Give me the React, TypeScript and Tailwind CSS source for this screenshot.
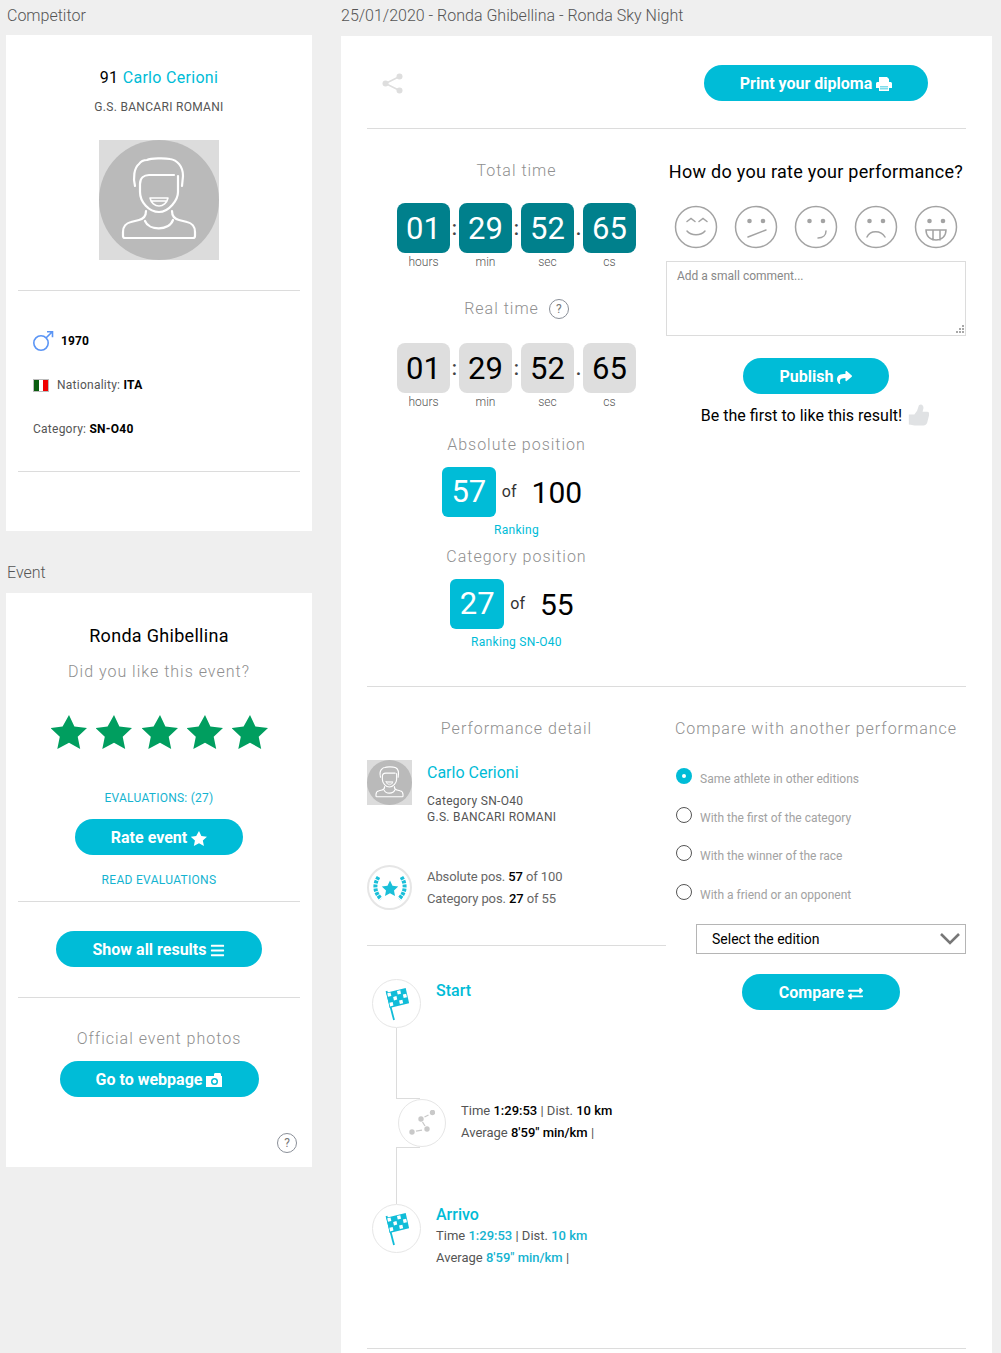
import React from 'react'
import { FaShare, FaBars, FaExchangeAlt } from 'react-icons/fa'

const Hr = ({ className = '' }: { className?: string }) => <div className={`h-px bg-[#dcdcdc] ${className}`} />

const Pill = ({ label, icon, className = '' }: { label: string; icon: React.ReactNode; className?: string }) => (
  <button type="button" className={`flex h-9 items-center justify-center gap-1 rounded-full bg-[#00bcd7] pt-[2px] text-[16px] font-bold text-white ${className}`}>
    {label}
    {icon}
  </button>
)

const Heading = ({ children, className = '' }: { children: React.ReactNode; className?: string }) => (
  <div className={`text-center text-[16px] leading-5 font-light tracking-[1px] text-[#8f8f8f] ${className}`}>{children}</div>
)

const HelpIcon = ({ size = 20 }: { size?: number }) => (
  <span
    className="inline-flex items-center justify-center rounded-full border border-[#8a8f98] text-[12px] text-[#777]"
    style={{ width: size, height: size }}
  >
    ?
  </span>
)

const Star = ({ className = '' }: { className?: string }) => (
  <svg viewBox="0 0 36 34" className={className} fill="currentColor">
    <path d="M18 0l5.400 11.600 12.600 1.500-9.300 8.700 2.500 12.200L18 27.800 6.300 34l2.500-12.200L-.5 13.100l12.100-1.500z" />
  </svg>
)

const Avatar = ({ stroke = 2.2 }: { stroke?: number }) => (
  <svg viewBox="0 0 120 120" className="h-full w-full">
    <rect width="120" height="120" fill="#dcdcdc" />
    <circle cx="60" cy="60" r="60" fill="#bababa" />
    <g fill="none" stroke="#fff" strokeWidth={stroke} strokeLinecap="round" strokeLinejoin="round">
      <path d="M36 46C34 38 35 28 40 24 42 21 46 20 48 20 52 18 66 18 71 19 78 20 84 26 84 36L83 46" />
      <path d="M75 35H50C45 35 41 38 41 44V52C41 62 50 72 60 72 70 72 79 60 79 52V36" />
      <path d="M51 58H69C68 63 64 66 60 66 56 66 52 63 51 58ZM53 61H67" strokeWidth={stroke * 0.7} />
      <path d="M47 71C47 76 44 79 40 80L32 82C27 83 24 87 24 92V96C24 97 25 98 26 98H94C95 98 96 97 96 96V92C96 87 93 83 88 82L80 80C76 79 73 76 73 71" />
      <path d="M46 81C50 91 70 91 74 80" />
    </g>
  </svg>
)

const TimeBox = ({ value, unit, dark }: { value: string; unit: string; dark?: boolean }) => (
  <div className="flex w-[53px] flex-col items-center">
    <div className={`flex h-[50px] w-[53px] items-center justify-center rounded-lg pt-[2px] text-[31px] ${dark ? 'bg-[#00808c] text-white' : 'bg-[#dedede] text-black'}`}>
      {value}
    </div>
    <span className="mt-[2px] text-[12px] leading-[14px] font-light text-[#555]">{unit}</span>
  </div>
)

const Sep = ({ c }: { c: string }) => <span className="flex h-[50px] w-[9px] items-center justify-center text-[20px] font-medium text-[#444]">{c}</span>

const Timer = ({ dark }: { dark?: boolean }) => (
  <div className="ml-[30px] flex">
    <TimeBox value="01" unit="hours" dark={dark} />
    <Sep c=":" />
    <TimeBox value="29" unit="min" dark={dark} />
    <Sep c=":" />
    <TimeBox value="52" unit="sec" dark={dark} />
    <Sep c="." />
    <TimeBox value="65" unit="cs" dark={dark} />
  </div>
)

const Position = ({ value, total, label, className = '' }: { value: string; total: string; label: string; className?: string }) => (
  <div className={`flex flex-col items-center ${className}`}>
    <div className="mr-[9px] flex items-center">
      <div className="flex h-[50px] w-[54px] items-center justify-center rounded-md bg-[#00bcd7] pt-px text-[31px] text-white">{value}</div>
      <span className="ml-[6px] text-[16px] text-[#333]">of</span>
      <span className="ml-[15px] text-[30px] text-black">{total}</span>
    </div>
    <span className="mt-[5px] text-[12px] leading-4 tracking-[0.3px] text-[#00bcd7]">{label}</span>
  </div>
)

const Face = ({ children }: { children: React.ReactNode }) => (
  <svg viewBox="0 0 44 44" className="h-11 w-11" fill="none" stroke="#a3a3a3" strokeWidth="1.500" strokeLinecap="round">
    <circle cx="22" cy="22" r="20.500" />
    {children}
  </svg>
)

const Eyes = () => (
  <>
    <circle cx="15.500" cy="16" r="2.300" fill="#a3a3a3" stroke="none" />
    <circle cx="29" cy="16" r="2.300" fill="#a3a3a3" stroke="none" />
  </>
)

const Faces = () => (
  <div className="ml-[8px] flex gap-4">
    <Face>
      <path d="M13 16.500l4-3 4 3M25 16.500l4-3 4 3M13 26c4 5 14 5 18 0" />
    </Face>
    <Face>
      <Eyes />
      <path d="M14 32l18-7" />
    </Face>
    <Face>
      <Eyes />
      <path d="M24 33c5 0 8-3 8-7" />
    </Face>
    <Face>
      <Eyes />
      <path d="M13 32c3-7 14-7 18 0" />
    </Face>
    <Face>
      <Eyes />
      <path d="M12 25H32C32 31 28 35 22 35 16 35 12 31 12 25ZM19 25V35M26 25V35" />
    </Face>
  </div>
)

const checker = [
  [0, 0],
  [2, 0],
  [1, 1],
  [3, 1],
  [0, 2],
  [2, 2],
]

const Flag = () => (
  <svg viewBox="0 0 24 34" className="h-[34px] w-[24px]">
    <path d="M1.500 4L9 33" fill="none" stroke="#10bcd8" strokeWidth="1.800" />
    <g transform="matrix(19.4 -4.7 3.4 15.3 1.300 5.700)">
      <rect width="1" height="1" fill="#10bcd8" />
      {checker.map(([x, y]) => (
        <rect key={`${x}-${y}`} x={0.04 + x * 0.25} y={0.05 + (y * 0.94) / 3} width="0.17" height="0.23" fill="#fff" />
      ))}
    </g>
  </svg>
)

const Circle = ({ children, className = '' }: { children: React.ReactNode; className?: string }) => (
  <div className={`flex shrink-0 items-center justify-center rounded-full border border-[#e6e6e6] bg-white ${className}`}>{children}</div>
)

const Radio = ({ label, on }: { label: string; on?: boolean }) => (
  <div className="flex h-[38.600px] items-start">
    <span className={`mt-[1px] flex h-4 w-4 items-center justify-center rounded-full ${on ? 'bg-[#00bcd7]' : 'border border-[#555]'}`}>
      {on && <span className="h-1 w-1 rounded-full bg-white" />}
    </span>
    <span className="mt-[4px] ml-2 text-[12px] leading-4 text-[#a2a2a2]">{label}</span>
  </div>
)

export default function App() {
  return (
    <div className="flex min-h-[1353px] bg-[#efefef] pl-[6px] font-['Roboto',sans-serif] text-[#555]">
      <aside className="w-[306px] shrink-0">
        <div className="h-[35px] pt-[6px] pl-px text-[16px] leading-5 font-light">Competitor</div>
        <section className="h-[496px] bg-white px-3 pt-[33px]">
          <div className="text-center text-[16px] leading-5 tracking-[0.3px] text-black">
            91 <span className="text-[#00bcd7]">Carlo Cerioni</span>
          </div>
          <div className="mt-[11px] text-center text-[12px] leading-4 tracking-[0.3px]">G.S. BANCARI ROMANI</div>
          <div className="mx-auto mt-[25px] h-[120px] w-[120px]">
            <Avatar />
          </div>
          <Hr className="mt-[30px]" />
          <div className="mt-[38px] flex h-[24px] items-center pl-[14px]">
            <svg viewBox="0 0 22 22" className="h-[22px] w-[22px]" fill="none" stroke="#5b95f5" strokeWidth="1.600">
              <circle cx="9" cy="13" r="7.200" />
              <path d="M14 8l6-6M15 1.800h5.500v5.500" />
            </svg>
            <b className="ml-[7px] text-[12px] tracking-[0.1px] text-black">1970</b>
          </div>
          <div className="mt-[24px] flex h-[16px] items-center pl-[15px] text-[12px] tracking-[0.25px]">
            <span className="flex h-[13px] w-[16px] border border-[#bbb]">
              <span className="flex-1 bg-[#0a5c0f]" />
              <span className="flex-1 bg-white" />
              <span className="flex-1 bg-[#f00000]" />
            </span>
            <span className="ml-2">
              Nationality: <b className="text-black">ITA</b>
            </span>
          </div>
          <div className="mt-[28px] h-[16px] pl-[15px] text-[12px] leading-4 tracking-[0.25px]">
            Category: <b className="text-black">SN-O40</b>
          </div>
          <Hr className="mt-[34px]" />
        </section>
        <div className="h-[62px] pt-[32px] pl-px text-[16px] leading-5 font-light">Event</div>
        <section className="h-[574px] bg-white px-3 pt-[33px]">
          <div className="text-center text-[18px] leading-5 tracking-[0.3px] text-black">Ronda Ghibellina</div>
          <Heading className="mt-[16px]">Did you like this event?</Heading>
          <div className="mt-[33px] ml-[33px] flex gap-[9.300px]">
            {[0, 1, 2, 3, 4].map((i) => (
              <Star key={i} className="h-[34px] w-[36px] text-[#009e5f]" />
            ))}
          </div>
          <div className="mt-[41px] text-center text-[12px] leading-4 tracking-[0.25px] text-[#14b3d0]">EVALUATIONS: (27)</div>
          <Pill label="Rate event" icon={<Star className="h-[15px] w-[16px]" />} className="mx-auto mt-[13px] w-[168px]" />
          <div className="mt-[17px] text-center text-[12px] leading-4 tracking-[0.3px] text-[#14b3d0]">READ EVALUATIONS</div>
          <Hr className="mt-[13px]" />
          <Pill label="Show all results" icon={<FaBars className="h-[15px] w-[15px]" />} className="mx-auto mt-[29px] w-[206px]" />
          <Hr className="mt-[30px]" />
          <Heading className="mt-[31px]">Official event photos</Heading>
          <Pill
            label="Go to webpage"
            icon={
              <svg viewBox="0 0 16 14" className="h-[14px] w-[16px]" fill="#fff">
                <path d="M0 3h8V1.500C8 .7 8.500 0 9.500 0h4c1 0 1.500.7 1.500 1.500V3h1v11H0z" />
                <circle cx="8.500" cy="8.500" r="3.500" fill="#00bcd7" />
                <circle cx="8.500" cy="8.500" r="2" fill="#fff" />
              </svg>
            }
            className="mx-auto mt-[12px] w-[199px]"
          />
          <div className="mt-[36px] flex justify-end pr-[3px]">
            <HelpIcon />
          </div>
        </section>
      </aside>

      <main className="ml-[29px] w-[651px] shrink-0">
        <div className="h-[36px] pt-[6px] text-[16px] leading-5 font-light">25/01/2020 - Ronda Ghibellina - Ronda Sky Night</div>
        <section className="bg-white px-[26px] pb-[4px]">
          <div className="flex h-[92px] items-start justify-between pt-[29px]">
            <svg viewBox="0 0 21 21" className="mt-[8px] ml-[15px] h-[21px] w-[21px]" fill="#dedede">
              <circle cx="17.500" cy="3.500" r="3" />
              <circle cx="3.500" cy="10.500" r="3" />
              <circle cx="17.500" cy="17.500" r="3" />
              <path d="M17.500 3.500l-14 7 14 7" fill="none" stroke="#dedede" strokeWidth="1.500" />
            </svg>
            <Pill
              label="Print your diploma"
              icon={
                <svg viewBox="0 0 16 14" className="h-[14px] w-[16px]" fill="#fff">
                  <path d="M3 0h8l2 2v3h1.500C15.300 5 16 5.700 16 6.500V11h-3v3H3v-3H0V6.500C0 5.700.7 5 1.500 5H3z" />
                  <path d="M4 9.500h8v.8H4zM4 11.500h8v.8H4z" fill="#00bcd7" />
                </svg>
              }
              className="mr-[38px] w-[224px]"
            />
          </div>
          <Hr />

          <div className="flex h-[557px]">
            <div className="w-[299px]">
              <Heading className="mt-[32px]">Total time</Heading>
              <div className="mt-[22px]">
                <Timer dark />
              </div>
              <div className="mt-[30px] flex items-center justify-center gap-[10px]">
                <Heading>Real time</Heading>
                <HelpIcon />
              </div>
              <div className="mt-[24px]">
                <Timer />
              </div>
              <Heading className="mt-[26px]">Absolute position</Heading>
              <Position value="57" total="100" label="Ranking" className="mt-[12px]" />
              <Heading className="mt-[9px]">Category position</Heading>
              <Position value="27" total="55" label="Ranking SN-O40" className="mt-[12px]" />
            </div>
            <div className="w-[300px]">
              <div className="mt-[33px] text-center text-[18px] leading-5 tracking-[0.28px] text-black">How do you rate your performance?</div>
              <div className="mt-[23px]">
                <Faces />
              </div>
              <div className="relative mt-[12px]">
                <textarea
                  readOnly
                  placeholder="Add a small comment..."
                  className="block h-[75px] w-[300px] resize-none border border-[#dcdcdc] px-[10px] py-[5px] text-[12px] outline-none placeholder:text-[#888]"
                />
                <svg viewBox="0 0 9 9" className="absolute right-[2px] bottom-[2px] h-[9px] w-[9px]" fill="#a8a8a8">
                  <path d="M7 0h2v2H7zM4 3h2v2H4zM7 3h2v2H7zM1 6h2v2H1zM4 6h2v2H4zM7 6h2v2H7z" />
                </svg>
              </div>
              <Pill label="Publish" icon={<FaShare className="h-[15px] w-[15px]" />} className="mx-auto mt-[22px] w-[146px]" />
              <div className="mt-[9px] flex items-center justify-center gap-[5px] pr-[2px] text-[16px] text-black">
                Be the first to like this result!
                <svg viewBox="0 0 24 24" className="mb-[3px] h-[23px] w-[22px]" fill="#e0e2e4">
                  <path d="M2 12h6l3-4 2-6c2-2 5-1 5 3l-1 4h5c2 0 3 2 2 4l-2 8c-1 2-2 3-4 3H8c-2 0-3-1-6-1z" />
                </svg>
              </div>
            </div>
          </div>
          <Hr />

          <div className="flex h-[661px]">
            <div className="w-[299px]">
              <Heading className="mt-[32px]">Performance detail</Heading>
              <div className="mt-[21px] flex">
                <div className="h-[45px] w-[45px] shrink-0">
                  <Avatar stroke={3} />
                </div>
                <div className="ml-[15px]">
                  <div className="mt-[3px] text-[16px] leading-5 text-[#00bcd7]">Carlo Cerioni</div>
                  <div className="mt-[10px] text-[12px] leading-4 tracking-[0.3px]">Category SN-O40</div>
                  <div className="text-[12px] leading-4 tracking-[0.3px]">G.S. BANCARI ROMANI</div>
                </div>
              </div>
              <div className="mt-[40px] flex items-center">
                <Circle className="h-[45px] w-[45px] border-2">
                  <svg viewBox="0 0 36 36" className="h-[36px] w-[36px]">
                    <path d="M18 10.500l2.500 5.200 5.700.7-4.200 4 1 5.600-5-2.700-5 2.700 1-5.600-4.200-4 5.700-.7z" fill="#19bfd9" />
                    <path d="M6.500 7C2 14 2 22 9 29M29.500 7C34 14 34 22 27 29" fill="none" stroke="#19bfd9" strokeWidth="4" strokeDasharray="3 1" />
                  </svg>
                </Circle>
                <div className="ml-[15px] text-[13px] leading-[22px] tracking-[-0.1px] text-[#666]">
                  <div>
                    Absolute pos. <span className="font-medium text-black">57</span> of 100
                  </div>
                  <div>
                    Category pos. <span className="font-medium text-black">27</span> of 55
                  </div>
                </div>
              </div>
              <Hr className="mt-[35px]" />
              <div className="mt-[33px] ml-[5px] flex">
                <Circle className="h-[49px] w-[49px]">
                  <Flag />
                </Circle>
                <div className="mt-[2px] ml-[15px] text-[16px] leading-5 font-medium text-[#00bcd7]">Start</div>
              </div>
              <div className="ml-[29px] h-[71px] w-[24px] border-b border-l border-[#dcdcdc]" />
              <div className="ml-[31px] flex items-center">
                <Circle className="h-[48px] w-[48px]">
                  <svg viewBox="0 0 26 26" className="h-[26px] w-[26px]" fill="#c9c9c9">
                    <circle cx="3" cy="22" r="2.700" />
                    <circle cx="18" cy="19" r="2.700" />
                    <circle cx="12" cy="9" r="2.700" />
                    <circle cx="23.500" cy="2.500" r="2.700" />
                    <path d="M7 21.200l6-1.100M13.500 12l2.500 4M15.500 7l4-2" stroke="#c9c9c9" strokeWidth="1.300" fill="none" />
                  </svg>
                </Circle>
                <div className="-mt-[2px] ml-[15px] text-[13px] leading-[22px]">
                  <div>
                    Time <span className="font-medium text-black">1:29:53</span> | Dist. <span className="font-medium text-black">10 km</span>
                  </div>
                  <div>
                    Average <span className="font-medium text-black">8'59" min/km</span> |
                  </div>
                </div>
              </div>
              <div className="ml-[29px] h-[57px] w-[24px] border-t border-l border-[#dcdcdc]" />
              <div className="ml-[5px] flex">
                <Circle className="h-[49px] w-[49px]">
                  <Flag />
                </Circle>
                <div className="mt-px ml-[15px] text-[13px] leading-[22px]">
                  <div className="text-[16px] leading-5 font-medium text-[#00bcd7]">Arrivo</div>
                  <div>
                    Time <span className="font-medium text-[#14b3d0]">1:29:53</span> | Dist. <span className="font-medium text-[#14b3d0]">10 km</span>
                  </div>
                  <div>
                    Average <span className="font-medium text-[#14b3d0]">8'59" min/km</span> |
                  </div>
                </div>
              </div>
            </div>
            <div className="w-[300px]">
              <Heading className="mt-[32px]">Compare with another performance</Heading>
              <div className="mt-[28px] ml-[10px]">
                <Radio label="Same athlete in other editions" on />
                <Radio label="With the first of the category" />
                <Radio label="With the winner of the race" />
                <Radio label="With a friend or an opponent" />
              </div>
              <div className="mt-[3px] ml-[30px] flex h-[30px] items-center justify-between border border-[#b5b5b5] pr-[5px] pl-[15px] text-[14px] text-black">
                Select the edition
                <svg viewBox="0 0 20 12" className="h-[12px] w-[20px]" fill="none" stroke="#777" strokeWidth="2.600">
                  <path d="M1 1l9 9 9-9" />
                </svg>
              </div>
              <Pill label="Compare" icon={<FaExchangeAlt className="h-[15px] w-[15px]" />} className="mt-[20px] ml-[76px] w-[158px]" />
            </div>
          </div>
          <Hr />
        </section>
      </main>
    </div>
  )
}
